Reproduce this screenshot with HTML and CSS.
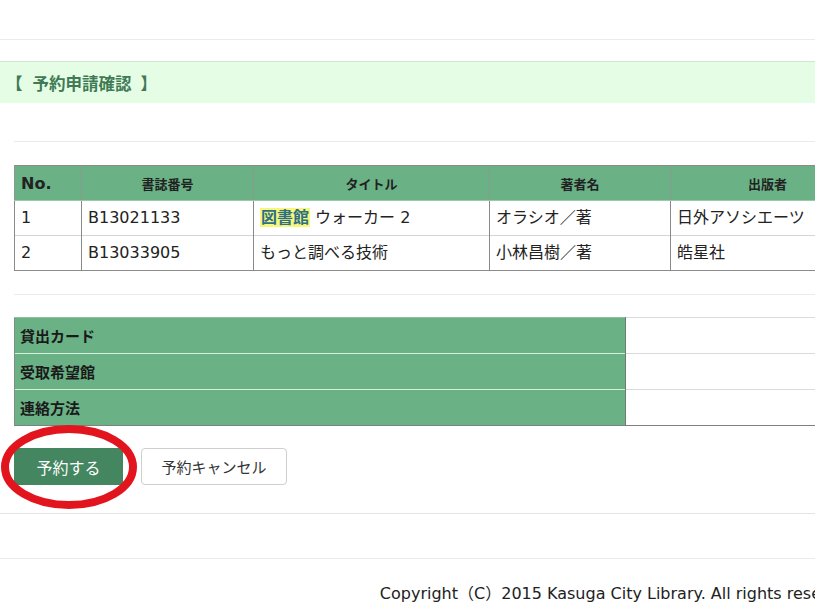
FILE: index.html
```html
<!DOCTYPE html>
<html lang="ja">
<head>
<meta charset="utf-8">
<title>予約申請確認</title>
<link rel="stylesheet" href="styles.css">
</head>
<body>
<div class="page">
  <div class="topbar"></div>
  <div class="band"><h2 class="band-title"><span class="br">【</span>予約申請確認<span class="br br-close">】</span></h2></div>
  <div class="sep sep-indent"></div>
  <table class="list">
    <colgroup>
      <col class="c-no"><col class="c-id"><col class="c-title"><col class="c-author"><col class="c-pub">
    </colgroup>
    <thead>
      <tr><th class="th-no">No.</th><th>書誌番号</th><th>タイトル</th><th>著者名</th><th>出版者</th></tr>
    </thead>
    <tbody>
      <tr><td>1</td><td>B13021133</td><td><span class="hl">図書館</span> ウォーカー 2</td><td>オラシオ／著</td><td>日外アソシエーツ</td></tr>
      <tr><td>2</td><td>B13033905</td><td>もっと調べる技術</td><td>小林昌樹／著</td><td>皓星社</td></tr>
    </tbody>
  </table>
  <div class="sep sep-indent sep-mid"></div>
  <table class="form">
    <tr><th>貸出カード</th><td></td></tr>
    <tr><th>受取希望館</th><td></td></tr>
    <tr><th>連絡方法</th><td></td></tr>
  </table>
  <div class="buttons">
    <div class="btn-wrap">
      <button class="btn btn-primary" type="button">予約する</button>
      <svg class="circle" width="140" height="86" viewBox="0 0 140 86" aria-hidden="true">
        <ellipse cx="69" cy="43" rx="64" ry="38" fill="none" stroke="#e2151f" stroke-width="8"/>
      </svg>
    </div>
    <button class="btn btn-default" type="button">予約キャンセル</button>
  </div>
  <div class="sep sep-bottom"></div>
  <div class="sep sep-foot"></div>
  <footer class="footer">Copyright（C）2015 Kasuga City Library. All rights reserved.</footer>
</div>
</body>
</html>
```
FILE: styles.css
```css
html, body {
  margin: 0;
  padding: 0;
  background: #fff;
  overflow: hidden;
}
body {
  font-family: "DejaVu Sans", "Noto Sans CJK JP", sans-serif;
  color: #222;
  font-size: 16px;
}
.page {
  width: 1242px;
}
.topbar {
  height: 39px;
  border-bottom: 1px solid #ebebeb;
}
.band {
  margin-top: 21px;
  border-top: 1px solid #cfe6cf;
  background: #e4fde4;
  height: 41px;
  display: flex;
  align-items: center;
  padding-left: 6px;
}
.band-title {
  margin: 0;
  font-family: "Noto Sans CJK JP", sans-serif;
  font-size: 16.5px;
  font-weight: bold;
  color: #3f7a55;
  line-height: 20px;
  display: flex;
  align-items: center;
}
.br {
  margin-right: 10px;
}
.br-close {
  margin-right: 0;
  margin-left: 9px;
}
.sep {
  border-top: 1px solid #ebebeb;
}
.sep-indent {
  margin-left: 14px;
  margin-top: 38px;
}
.list {
  margin: 23px 0 0 14px;
  border-collapse: collapse;
  table-layout: fixed;
  width: 850px;
  border: 1px solid #8a8a8a;
}
.c-no { width: 67px; }
.c-id { width: 172px; }
.c-title { width: 236px; }
.c-author { width: 181px; }
.c-pub { width: 194px; }
.list th {
  background: #6bb186;
  height: 34px;
  padding: 0 6px;
  font-family: "Noto Sans CJK JP", sans-serif;
  font-size: 13px;
  font-weight: bold;
  color: #222;
  text-align: center;
  border-left: 1px solid #8a9a8f;
  border-bottom: 1px solid #9cc8a9;
}
.list th.th-no {
  text-align: left;
  font-family: "DejaVu Sans", sans-serif;
  font-size: 16px;
}
.list td {
  height: 34px;
  padding: 0 6px;
  border-left: 1px solid #8a8a8a;
  border-top: 1px solid #d4d4d4;
  white-space: nowrap;
  overflow: hidden;
  line-height: 20px;
}
.hl {
  background: #f7f77a;
  color: #2d6f86;
  font-weight: bold;
  padding: 0 1px;
}
.sep-mid {
  margin-top: 23px;
}
.form {
  margin: 22px 0 0 14px;
  border-collapse: collapse;
  table-layout: fixed;
  width: 830px;
  border-bottom: 1px solid #7f7f7f;
}
.form th {
  width: 600px;
  background: #6bb186;
  height: 33px;
  padding: 0 5px;
  text-align: left;
  font-family: "Noto Sans CJK JP", sans-serif;
  font-size: 15px;
  line-height: 20px;
  font-weight: bold;
  color: #1a1a1a;
  border-left: 1px solid #7f8f85;
  border-right: 1px solid #6c7a70;
  border-top: 1px solid #d6efdb;
}
.form tr:first-child th {
  border-top: 1px solid #8fbf9c;
}
.form td {
  height: 33px;
  border-top: 1px solid #dadada;
}
.buttons {
  margin: 22px 0 0 14px;
  display: flex;
  gap: 18px;
  align-items: center;
}
.btn-wrap {
  position: relative;
}
.btn {
  font-family: "Noto Sans CJK JP", sans-serif;
  font-size: 16px;
  height: 37px;
  margin: 0;
  border-radius: 3px;
  cursor: pointer;
}
.btn-primary {
  display: block;
  width: 109px;
  background: #438660;
  color: #fff;
  border: 1px solid #438660;
}
.btn-default {
  width: 146px;
  background: #fff;
  color: #333;
  font-size: 15px;
  border: 1px solid #cfcfcf;
  border-radius: 4px;
}
.circle {
  position: absolute;
  left: -14px;
  top: -24px;
  pointer-events: none;
}
.sep-bottom {
  margin-top: 28px;
  border-top-color: #e4e4e4;
}
.sep-foot {
  margin-top: 44px;
}
.footer {
  margin-top: 24px;
  text-align: center;
  font-family: "DejaVu Sans", "Noto Sans CJK JP", sans-serif;
  font-size: 16px;
  line-height: 22px;
  color: #222;
}
```
